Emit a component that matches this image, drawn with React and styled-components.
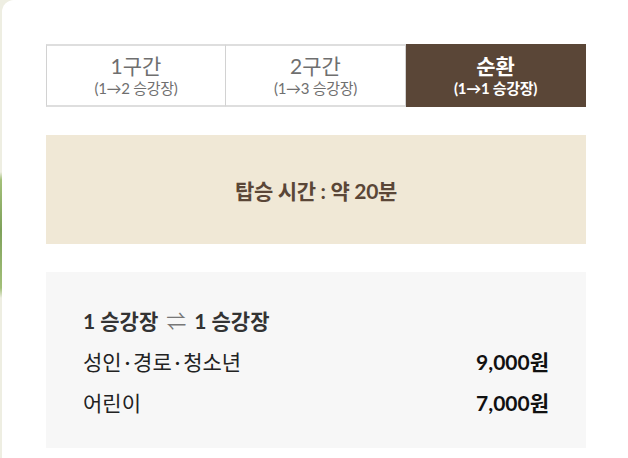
import React, { useState } from 'react';
import styled, { createGlobalStyle } from 'styled-components';

const Global = createGlobalStyle`
  html, body { margin: 0; padding: 0; }
  body {
    font-family: "Lato", "Noto Sans CJK KR", sans-serif;
    background: #fff;
  }
`;

const Page = styled.div`
  min-height: 458px;
  padding-left: 2px;
  background: linear-gradient(
    to bottom,
    #eeeee2 0,
    #eeeee2 172px,
    #a3c079 180px,
    #7ea15a 230px,
    #a3c079 288px,
    #eeeee2 298px,
    #eeeee2 100%
  );
  display: flex;
`;

const Panel = styled.div`
  flex: 1;
  background: #fff;
  border-top-left-radius: 12px;
  padding: 44px 0 10px 44px;
`;

const Content = styled.div`
  width: 540px;
  display: flex;
  flex-direction: column;
`;

const Tabs = styled.div`
  display: grid;
  grid-template-columns: repeat(3, 1fr);
  height: 63px;
`;

const Tab = styled.button`
  all: unset;
  cursor: pointer;
  display: flex;
  flex-direction: column;
  align-items: center;
  justify-content: center;
  box-sizing: border-box;
  border: 1px solid #d2d2d2;
  border-top: 2px solid #dedede;
  border-bottom: 2px solid #dedede;
  & + & { border-left: none; }
  background: ${p => (p.$active ? '#5a4637' : '#fff')};
  border-color: ${p => (p.$active ? '#5a4637' : undefined)};
  color: ${p => (p.$active ? '#fff' : '#6f6f6f')};
  font-weight: ${p => (p.$active ? 700 : 400)};
`;

const TabTitle = styled.span`
  font-size: 21px;
  line-height: 24px;
`;

const TabSub = styled.span`
  font-size: 15px;
  line-height: 18px;
  margin-top: 1px;
  letter-spacing: -0.3px;
`;

const TimeBox = styled.div`
  margin-top: 28px;
  height: 109px;
  background: #f0e8d6;
  display: flex;
  align-items: center;
  justify-content: center;
  color: #5a4637;
  font-weight: 700;
  font-size: 21px;
  letter-spacing: -0.3px;
`;

const FareBox = styled.div`
  margin-top: 28px;
  background: #f7f7f7;
  padding: 33px 37px 29px 37px;
  display: flex;
  flex-direction: column;
  gap: 8px;
  color: #222;
`;

const FareTitle = styled.div`
  font-size: 21px;
  font-weight: 700;
  color: #333;
  line-height: 32px;
  display: flex;
  align-items: center;
  gap: 8px;
`;

const Swap = styled.span`
  color: #777;
  font-weight: 400;
  font-size: 20px;
`;

const Row = styled.div`
  display: flex;
  justify-content: space-between;
  align-items: center;
  font-size: 21px;
  line-height: 33px;
`;

const Dot = styled.span`
  margin: 0 3px;
`;

const Price = styled.span`
  font-weight: 700;
  color: #111;
`;

const tabs = [
  { title: '1구간', sub: '(1→2 승강장)', time: '약 10분', route: ['1 승강장', '2 승강장'] },
  { title: '2구간', sub: '(1→3 승강장)', time: '약 15분', route: ['1 승강장', '3 승강장'] },
  { title: '순환', sub: '(1→1 승강장)', time: '약 20분', route: ['1 승강장', '1 승강장'] },
];

export default function App() {
  const [active, setActive] = useState(2);
  const t = tabs[active];
  return (
    <Page>
      <Global />
      <Panel>
        <Content>
          <Tabs>
            {tabs.map((tab, i) => (
              <Tab key={i} $active={i === active} onClick={() => setActive(i)}>
                <TabTitle>{tab.title}</TabTitle>
                <TabSub>{tab.sub}</TabSub>
              </Tab>
            ))}
          </Tabs>
          <TimeBox>탑승 시간 : {t.time}</TimeBox>
          <FareBox>
            <FareTitle>
              {t.route[0]} <Swap>⇌</Swap> {t.route[1]}
            </FareTitle>
            <Row>
              <span>성인<Dot>·</Dot>경로<Dot>·</Dot>청소년</span>
              <Price>9,000원</Price>
            </Row>
            <Row>
              <span>어린이</span>
              <Price>7,000원</Price>
            </Row>
          </FareBox>
        </Content>
      </Panel>
    </Page>
  );
}
